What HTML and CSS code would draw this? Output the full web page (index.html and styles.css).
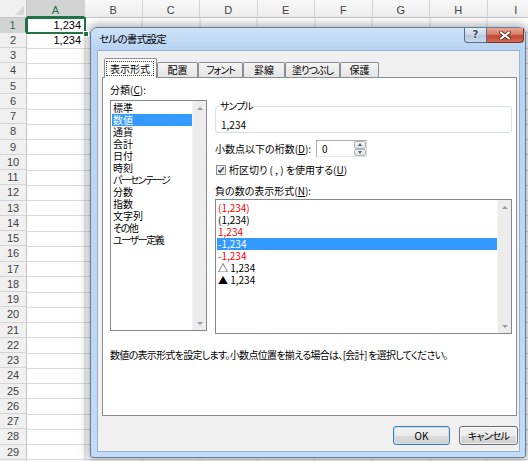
FILE: index.html
```html
<!DOCTYPE html>
<html lang="ja">
<head>
<meta charset="utf-8">
<title>セルの書式設定</title>
<link rel="stylesheet" href="styles.css">
</head>
<body>
<div class="sheet">
  <div class="colheads">
    <div class="corner"><span class="tri"></span></div>
    <div class="ch cha sel">A</div>
    <div class="ch">B</div>
    <div class="ch">C</div>
    <div class="ch">D</div>
    <div class="ch">E</div>
    <div class="ch">F</div>
    <div class="ch">G</div>
    <div class="ch">H</div>
    <div class="ch">I</div>
  </div>
  <div class="sheet-body">
    <div class="rowheads">
      <div class="rh sel">1</div><div class="rh">2</div><div class="rh">3</div><div class="rh">4</div><div class="rh">5</div>
      <div class="rh">6</div><div class="rh">7</div><div class="rh">8</div><div class="rh">9</div><div class="rh">10</div>
      <div class="rh">11</div><div class="rh">12</div><div class="rh">13</div><div class="rh">14</div><div class="rh">15</div>
      <div class="rh">16</div><div class="rh">17</div><div class="rh">18</div><div class="rh">19</div><div class="rh">20</div>
      <div class="rh">21</div><div class="rh">22</div><div class="rh">23</div><div class="rh">24</div><div class="rh">25</div>
      <div class="rh">26</div><div class="rh">27</div><div class="rh">28</div><div class="rh">29</div><div class="rh"></div>
    </div>
    <div class="cells">
      <div class="cell active">1,234<span class="handle"></span></div>
      <div class="cell">1,234</div>
    </div>
  </div>
</div>

<div class="dialog">
  <div class="titlebar">
    <span class="title">セルの書式設定</span>
    <div class="caption-btns">
      <span class="cap-help">?</span>
      <span class="cap-close">
        <svg width="12" height="9" viewBox="0 0 12 9"><path d="M2 1.5 L10 7.5 M10 1.5 L2 7.5" stroke="#5a1f17" stroke-width="3.6" stroke-linecap="square" fill="none"/><path d="M2 1.5 L10 7.5 M10 1.5 L2 7.5" stroke="#ffffff" stroke-width="2" stroke-linecap="square" fill="none"/></svg>
      </span>
    </div>
  </div>
  <div class="client">
    <div class="tabs">
      <div class="tab sel w1"><span class="focus">表示形式</span></div>
      <div class="tab w2">配置</div>
      <div class="tab w3 k">フォント</div>
      <div class="tab w4">罫線</div>
      <div class="tab w5 k">塗りつぶし</div>
      <div class="tab w6">保護</div>
    </div>
    <div class="panel">
      <div class="panel-cols">
        <div class="col-left">
          <div class="lbl">分類(<u>C</u>):</div>
          <div class="listbox cat">
            <ul class="items">
              <li>標準</li>
              <li class="sel">数値</li>
              <li>通貨</li>
              <li>会計</li>
              <li>日付</li>
              <li>時刻</li>
              <li class="k">パーセンテージ</li>
              <li>分数</li>
              <li>指数</li>
              <li>文字列</li>
              <li class="k">その他</li>
              <li class="k">ユーザー定義</li>
            </ul>
            <div class="vscroll"><span class="arr up"></span><span class="arr down"></span></div>
          </div>
        </div>
        <div class="col-right">
          <fieldset class="sample">
            <legend>サンプル</legend>
            <div class="sample-val">1,234</div>
          </fieldset>
          <div class="spin-row">
            <span class="spin-lbl">小数点以下の桁数(<u>D</u>):</span>
            <div class="spin">
              <span class="spin-val">0</span>
              <div class="spin-btns">
                <span class="sb"><span class="sarr up"></span></span>
                <span class="sb"><span class="sarr down"></span></span>
              </div>
            </div>
          </div>
          <div class="chk-row">
            <svg class="chk" width="10" height="10" viewBox="0 0 10 10"><rect x="0.5" y="0.5" width="9" height="9" fill="#f4f4f4" stroke="#8e8f8f"/><rect x="1.5" y="1.5" width="7" height="7" fill="#e6e8ec"/><path d="M2.3 5.2 L4.1 7.2 L7.8 2.4" stroke="#2d3a5e" stroke-width="1.5" fill="none"/></svg>
            <span>桁区切り ( , ) を使用する(<u>U</u>)</span>
          </div>
          <div class="lbl neg-lbl">負の数の表示形式(<u>N</u>):</div>
          <div class="listbox neg">
            <ul class="items">
              <li class="red">(1,234)</li>
              <li>(1,234)</li>
              <li class="red">1,234</li>
              <li class="sel">-1,234</li>
              <li class="red">-1,234</li>
              <li>△ 1,234</li>
              <li>▲ 1,234</li>
            </ul>
            <div class="vscroll"><span class="arr up"></span><span class="arr down"></span></div>
          </div>
        </div>
      </div>
      <p class="desc">数値の表示形式を設定します。小数点位置を揃える場合は、[会計] を選択してください。</p>
    </div>
    <div class="buttons">
      <button class="btn ok">OK</button>
      <button class="btn cancel">キャンセル</button>
    </div>
  </div>
</div>
</body>
</html>
```
FILE: styles.css
```css
html, body {
  margin: 0;
  padding: 0;
}
body {
  width: 528px;
  height: 461px;
  overflow: hidden;
  position: relative;
  background: #fff;
}

/* ---------- spreadsheet ---------- */
.sheet {
  width: 528px;
  height: 461px;
  overflow: hidden;
  font-family: "Liberation Sans", Arial, sans-serif;
  font-size: 11px;
  color: #444;
}
.colheads {
  display: flex;
  height: 17.5px;
}
.corner {
  width: 27px;
  flex: none;
  box-sizing: border-box;
  background: #f0f0f0;
  border-right: 1px solid #c6c6c6;
  border-bottom: 1px solid #c6c6c6;
  position: relative;
}
.tri {
  position: absolute;
  right: 2px;
  bottom: 2px;
  width: 0;
  height: 0;
  border-left: 9px solid transparent;
  border-bottom: 9px solid #d8d8d8;
}
.ch {
  width: 57.5px;
  flex: none;
  box-sizing: border-box;
  text-align: center;
  padding-top: 3px;
  line-height: 14px;
  background: linear-gradient(#f8f8f8, #ededed);
  border-right: 1px solid #d4d4d4;
  border-bottom: 1px solid #c6c6c6;
}
.ch.cha {
  width: 58px;
}
.ch.sel {
  background: #d3d3d3;
  color: #217346;
  border-bottom: 2px solid #217346;
}
.sheet-body {
  display: flex;
}
.rowheads {
  width: 27px;
  flex: none;
}
.rh {
  height: 15.25px;
  box-sizing: border-box;
  background: #f0f0f0;
  border-right: 1px solid #c6c6c6;
  border-bottom: 1px solid #d4d4d4;
  text-align: center;
  line-height: 15px;
}
.rh.sel {
  background: #d3d3d3;
  color: #217346;
  border-right: 2px solid #217346;
}
.cells {
  flex: 1;
  height: 460px;
  background-image:
    repeating-linear-gradient(to bottom, transparent 0 14.25px, #dadada 14.25px 15.25px),
    repeating-linear-gradient(to right, transparent 0 56.5px, #dadada 56.5px 57.5px);
  background-position: 0 0, 0.5px 0;
}
.cell {
  width: 58px;
  height: 15.25px;
  box-sizing: border-box;
  text-align: right;
  padding-right: 4px;
  line-height: 15px;
  color: #000;
}
.cell.active {
  position: relative;
}
.cell.active::after {
  content: "";
  position: absolute;
  left: -1px;
  top: -1px;
  right: -1px;
  bottom: -1px;
  border: 2px solid #217346;
}
.handle {
  position: absolute;
  right: -4px;
  bottom: -4px;
  width: 4px;
  height: 4px;
  background: #217346;
  border: 1px solid #fff;
  z-index: 1;
}

/* ---------- dialog ---------- */
.dialog {
  position: absolute;
  left: 90px;
  top: 27px;
  width: 436px;
  height: 431px;
  box-sizing: border-box;
  border: 1px solid #5f7f9f;
  border-radius: 7px 7px 3px 3px;
  background: linear-gradient(to bottom, #cfe3f8 0, #b8d4f2 20px, #bdd7f3 60%, #c3dbf4 100%);
  padding: 0 5px 5px 6px;
  display: flex;
  flex-direction: column;
  box-shadow: 0 0 9px 3px rgba(0, 0, 0, 0.28);
  font-family: "Noto Sans CJK JP", sans-serif;
  font-size: 10px;
  line-height: 12px;
  color: #000;
  font-feature-settings: "palt" 1;
}
.k {
  letter-spacing: -1.4px;
}
.titlebar {
  height: 22px;
  flex: none;
  display: flex;
  align-items: flex-start;
}
.title {
  margin: 5px 0 0 2px;
  font-size: 10.5px;
  line-height: 12px;
  letter-spacing: -0.7px;
}
.caption-btns {
  margin-left: auto;
  margin-right: -4px;
  display: flex;
}
.cap-help {
  width: 23px;
  height: 15px;
  box-sizing: border-box;
  border: 1px solid #5b6f8a;
  border-top: none;
  border-radius: 0 0 0 4px;
  background: linear-gradient(#e3ebf5 0, #c8d6e8 50%, #b3c6de 50%, #cbdaec 100%);
  text-align: center;
  font-family: "DejaVu Sans", sans-serif;
  font-weight: bold;
  font-size: 10px;
  line-height: 13px;
  color: #3b4a60;
  text-shadow: 0 0 2px #fff;
}
.cap-close {
  width: 37px;
  height: 15px;
  box-sizing: border-box;
  border: 1px solid #7c2f25;
  border-top: none;
  border-left: none;
  border-radius: 0 0 4px 0;
  background: linear-gradient(#e9a696 0, #d57c68 45%, #c24630 55%, #d16a52 100%);
  display: flex;
  align-items: center;
  justify-content: center;
}
.cap-close svg {
  display: block;
}
.client {
  flex: 1;
  background: #f0f0f0;
  border: 1px solid #97b1ce;
  padding: 7px 1px 6px 4px;
  display: flex;
  flex-direction: column;
}

/* tabs */
.tabs {
  display: flex;
  align-items: flex-end;
  height: 19px;
  flex: none;
  margin-left: 2px;
}
.tab {
  height: 15px;
  box-sizing: border-box;
  border: 1px solid #8c8e94;
  border-bottom: none;
  background: linear-gradient(#f4f4f4, #e4e4e4);
  text-align: center;
  line-height: 14px;
  border-radius: 2px 2px 0 0;
}
.tab.k {
  letter-spacing: -1px;
}
.tab.sel {
  height: 20px;
  margin-bottom: -1px;
  background: #fff;
  position: relative;
  z-index: 1;
}
.focus {
  display: block;
  margin: 2px 2px 0 1px;
  height: 15px;
  box-sizing: border-box;
  border: 1px dotted #444;
  line-height: 13px;
}
.w1 { width: 53px; }
.w2 { width: 41px; }
.w3 { width: 45px; }
.w4 { width: 42px; }
.w5 { width: 55px; }
.w6 { width: 39px; }

/* panel */
.panel {
  height: 339px;
  flex: none;
  box-sizing: border-box;
  margin-right: 1px;
  border: 1px solid #898c95;
  background: #fff;
  padding: 0 4px 0 7px;
}
.panel-cols {
  display: flex;
  gap: 8px;
  align-items: flex-start;
}
.col-left {
  width: 97px;
  padding-top: 6px;
}
.col-right {
  width: 297px;
  padding-top: 22px;
}
.lbl {
  height: 12px;
  white-space: nowrap;
}
.listbox {
  border: 1px solid #828790;
  background: #fff;
  display: flex;
  box-sizing: border-box;
  margin-top: 4px;
}
.cat {
  width: 97px;
  height: 231px;
}
.neg {
  width: 297px;
  height: 135px;
  margin-top: 2px;
}
.items {
  flex: 1;
  list-style: none;
  margin: 0;
  padding: 1px 0 0 1px;
}
.neg .items {
  padding-top: 2px;
}
.items li {
  height: 12px;
  line-height: 12px;
  padding-left: 1px;
  white-space: nowrap;
}
.items li.sel {
  background: #3399ff;
  color: #fff;
}
.items li.red {
  color: #ff0000;
}
.vscroll {
  width: 14px;
  flex: none;
  background: #ececec;
  border-left: 1px solid #f4f4f4;
  box-sizing: border-box;
  display: flex;
  flex-direction: column;
  justify-content: space-between;
  align-items: center;
  padding: 6px 0 5px;
}
.arr {
  width: 0;
  height: 0;
  border-left: 3px solid transparent;
  border-right: 3px solid transparent;
}
.arr.up {
  border-bottom: 3px solid #9a9a9a;
}
.arr.down {
  border-top: 3px solid #9a9a9a;
}

/* sample group */
.sample {
  margin: 0;
  padding: 0 4px 1px 5px;
  border: 1px solid #d5dfe5;
  border-radius: 3px;
  min-width: 0;
}
.sample legend {
  padding: 0 1px;
  margin-left: -2px;
  line-height: 12px;
  letter-spacing: -1px;
}
.sample-val {
  margin-top: 7px;
  height: 12px;
}

/* spin */
.spin-row {
  display: flex;
  align-items: center;
  margin-top: 7px;
  height: 17px;
}
.spin-lbl {
  width: 101px;
  white-space: nowrap;
}
.spin {
  width: 51px;
  height: 17px;
  box-sizing: border-box;
  border: 1px solid #abadb3;
  border-right-color: #dbdfe6;
  border-bottom-color: #e3e9ef;
  background: #fff;
  display: flex;
}
.spin-val {
  flex: 1;
  padding-left: 5px;
  line-height: 15px;
}
.spin-btns {
  width: 12px;
  display: flex;
  flex-direction: column;
}
.sb {
  flex: 1;
  box-sizing: border-box;
  border: 1px solid #b4b4b4;
  border-radius: 2px;
  background: linear-gradient(#f5f5f5, #e0e0e0);
  display: flex;
  align-items: center;
  justify-content: center;
}
.sarr {
  width: 0;
  height: 0;
  border-left: 2.5px solid transparent;
  border-right: 2.5px solid transparent;
}
.sarr.up {
  border-bottom: 3px solid #4d6185;
}
.sarr.down {
  border-top: 3px solid #4d6185;
}

/* checkbox */
.chk-row {
  display: flex;
  align-items: center;
  margin-top: 7px;
  height: 12px;
  white-space: nowrap;
}
.chk {
  margin-left: 1px;
  margin-right: 3px;
  flex: none;
}
.neg-lbl {
  margin-top: 9px;
}

.desc {
  margin: 15px 0 0;
  height: 12px;
  white-space: nowrap;
  letter-spacing: -0.7px;
}

/* buttons */
.buttons {
  display: flex;
  justify-content: flex-end;
  gap: 9px;
  margin-top: 10px;
  height: 19px;
  flex: none;
}
.btn {
  height: 19px;
  box-sizing: border-box;
  border: 1px solid #707070;
  border-radius: 3px;
  background: linear-gradient(#f2f2f2 0, #ebebeb 50%, #dddddd 50%, #cfcfcf 100%);
  font-family: inherit;
  font-size: 10px;
  line-height: 12px;
  color: #000;
  padding: 0;
  font-feature-settings: "palt" 1;
  box-shadow: inset 0 0 0 1px rgba(255, 255, 255, 0.7);
}
.ok {
  width: 57px;
  border-color: #3c7fb1;
  box-shadow: inset 0 0 0 1px #bfe3f7;
}
.cancel {
  width: 59px;
  letter-spacing: -0.8px;
}
```
